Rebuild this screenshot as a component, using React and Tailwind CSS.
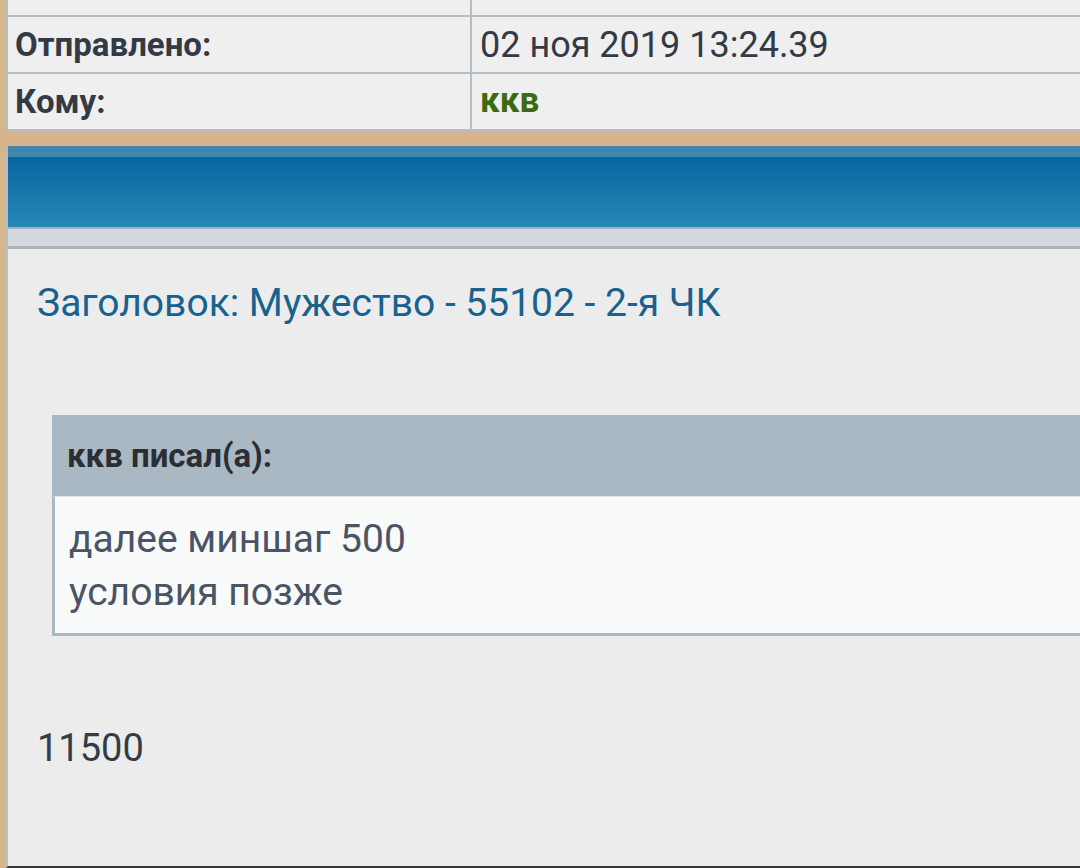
export default function App() {
  return (
    <div className="h-[868px] overflow-hidden bg-[#d6b58b] pl-[6px] flex flex-col font-['Roboto',sans-serif]">
      {/* header table */}
      <div className="border-l-2 border-b-2 border-[#b3bfc6] bg-[#efefef]">
        <div className="grid grid-cols-[464px_1fr] h-[17px] border-b-2 border-[#b3bfc6]">
          <div className="border-r-2 border-[#b3bfc6]" />
          <div />
        </div>
        <div className="grid grid-cols-[464px_1fr] h-[57px] border-b-2 border-[#b3bfc6] text-[#333a46]">
          <div className="border-r-2 border-[#b3bfc6] flex items-center pl-[7px] font-bold text-[33px]">Отправлено:</div>
          <div className="flex items-center pl-[8px] text-[36px]">02 ноя 2019 13:24.39</div>
        </div>
        <div className="grid grid-cols-[464px_1fr] h-[55px] text-[33px]">
          <div className="border-r-2 border-[#b3bfc6] flex items-center pl-[7px] font-bold text-[#333a46]">Кому:</div>
          <div className="flex items-center pl-[8px] font-bold text-[35px] text-[#3b6b0f]">ккв</div>
        </div>
      </div>

      <div className="h-[15px]" />

      {/* blue bar */}
      <div className="border-l-2 border-[#b3bfc6] flex flex-col">
        <div className="h-[11px] bg-[#4186ad]" />
        <div className="h-[70px] bg-gradient-to-b from-[#06669f] to-[#2787b7]" />
        <div className="h-[2px] bg-[#9fb3be]" />
        <div className="h-[17px] bg-[#d4d9df]" />
        <div className="h-[3px] bg-[#a8b6ba]" />
      </div>

      {/* post body */}
      <div className="flex-1 border-l-2 border-[#b9c1c6] bg-[#ececec] border-b-2 border-b-[#363636] flex flex-col">
        <div className="pl-[29px] pt-[32px] text-[39px] leading-[44px] text-[#1a628e]">
          Заголовок: Мужество - 55102 - 2-я ЧК
        </div>
        <div className="ml-[44px] mt-[90px] -mr-[20px]">
          <div className="h-[81px] bg-[#a9b8c3] flex items-center pl-[15px] text-[33px] font-bold text-[#2b2e33]">
            ккв писал(а):
          </div>
          <div className="h-[140px] bg-[#f9fafa] border-l-[3px] border-b-[3px] border-[#a9b8c3] border-t border-t-[#dde3e7] pl-[14px] pt-[16px] text-[39px] leading-[53px] text-[#4a5466]">
            <div>далее миншаг 500</div>
            <div>условия позже</div>
          </div>
        </div>
        <div className="pl-[29px] mt-[90px] text-[38px] leading-[44px] text-[#343c48]">11500</div>
      </div>
    </div>
  )
}
